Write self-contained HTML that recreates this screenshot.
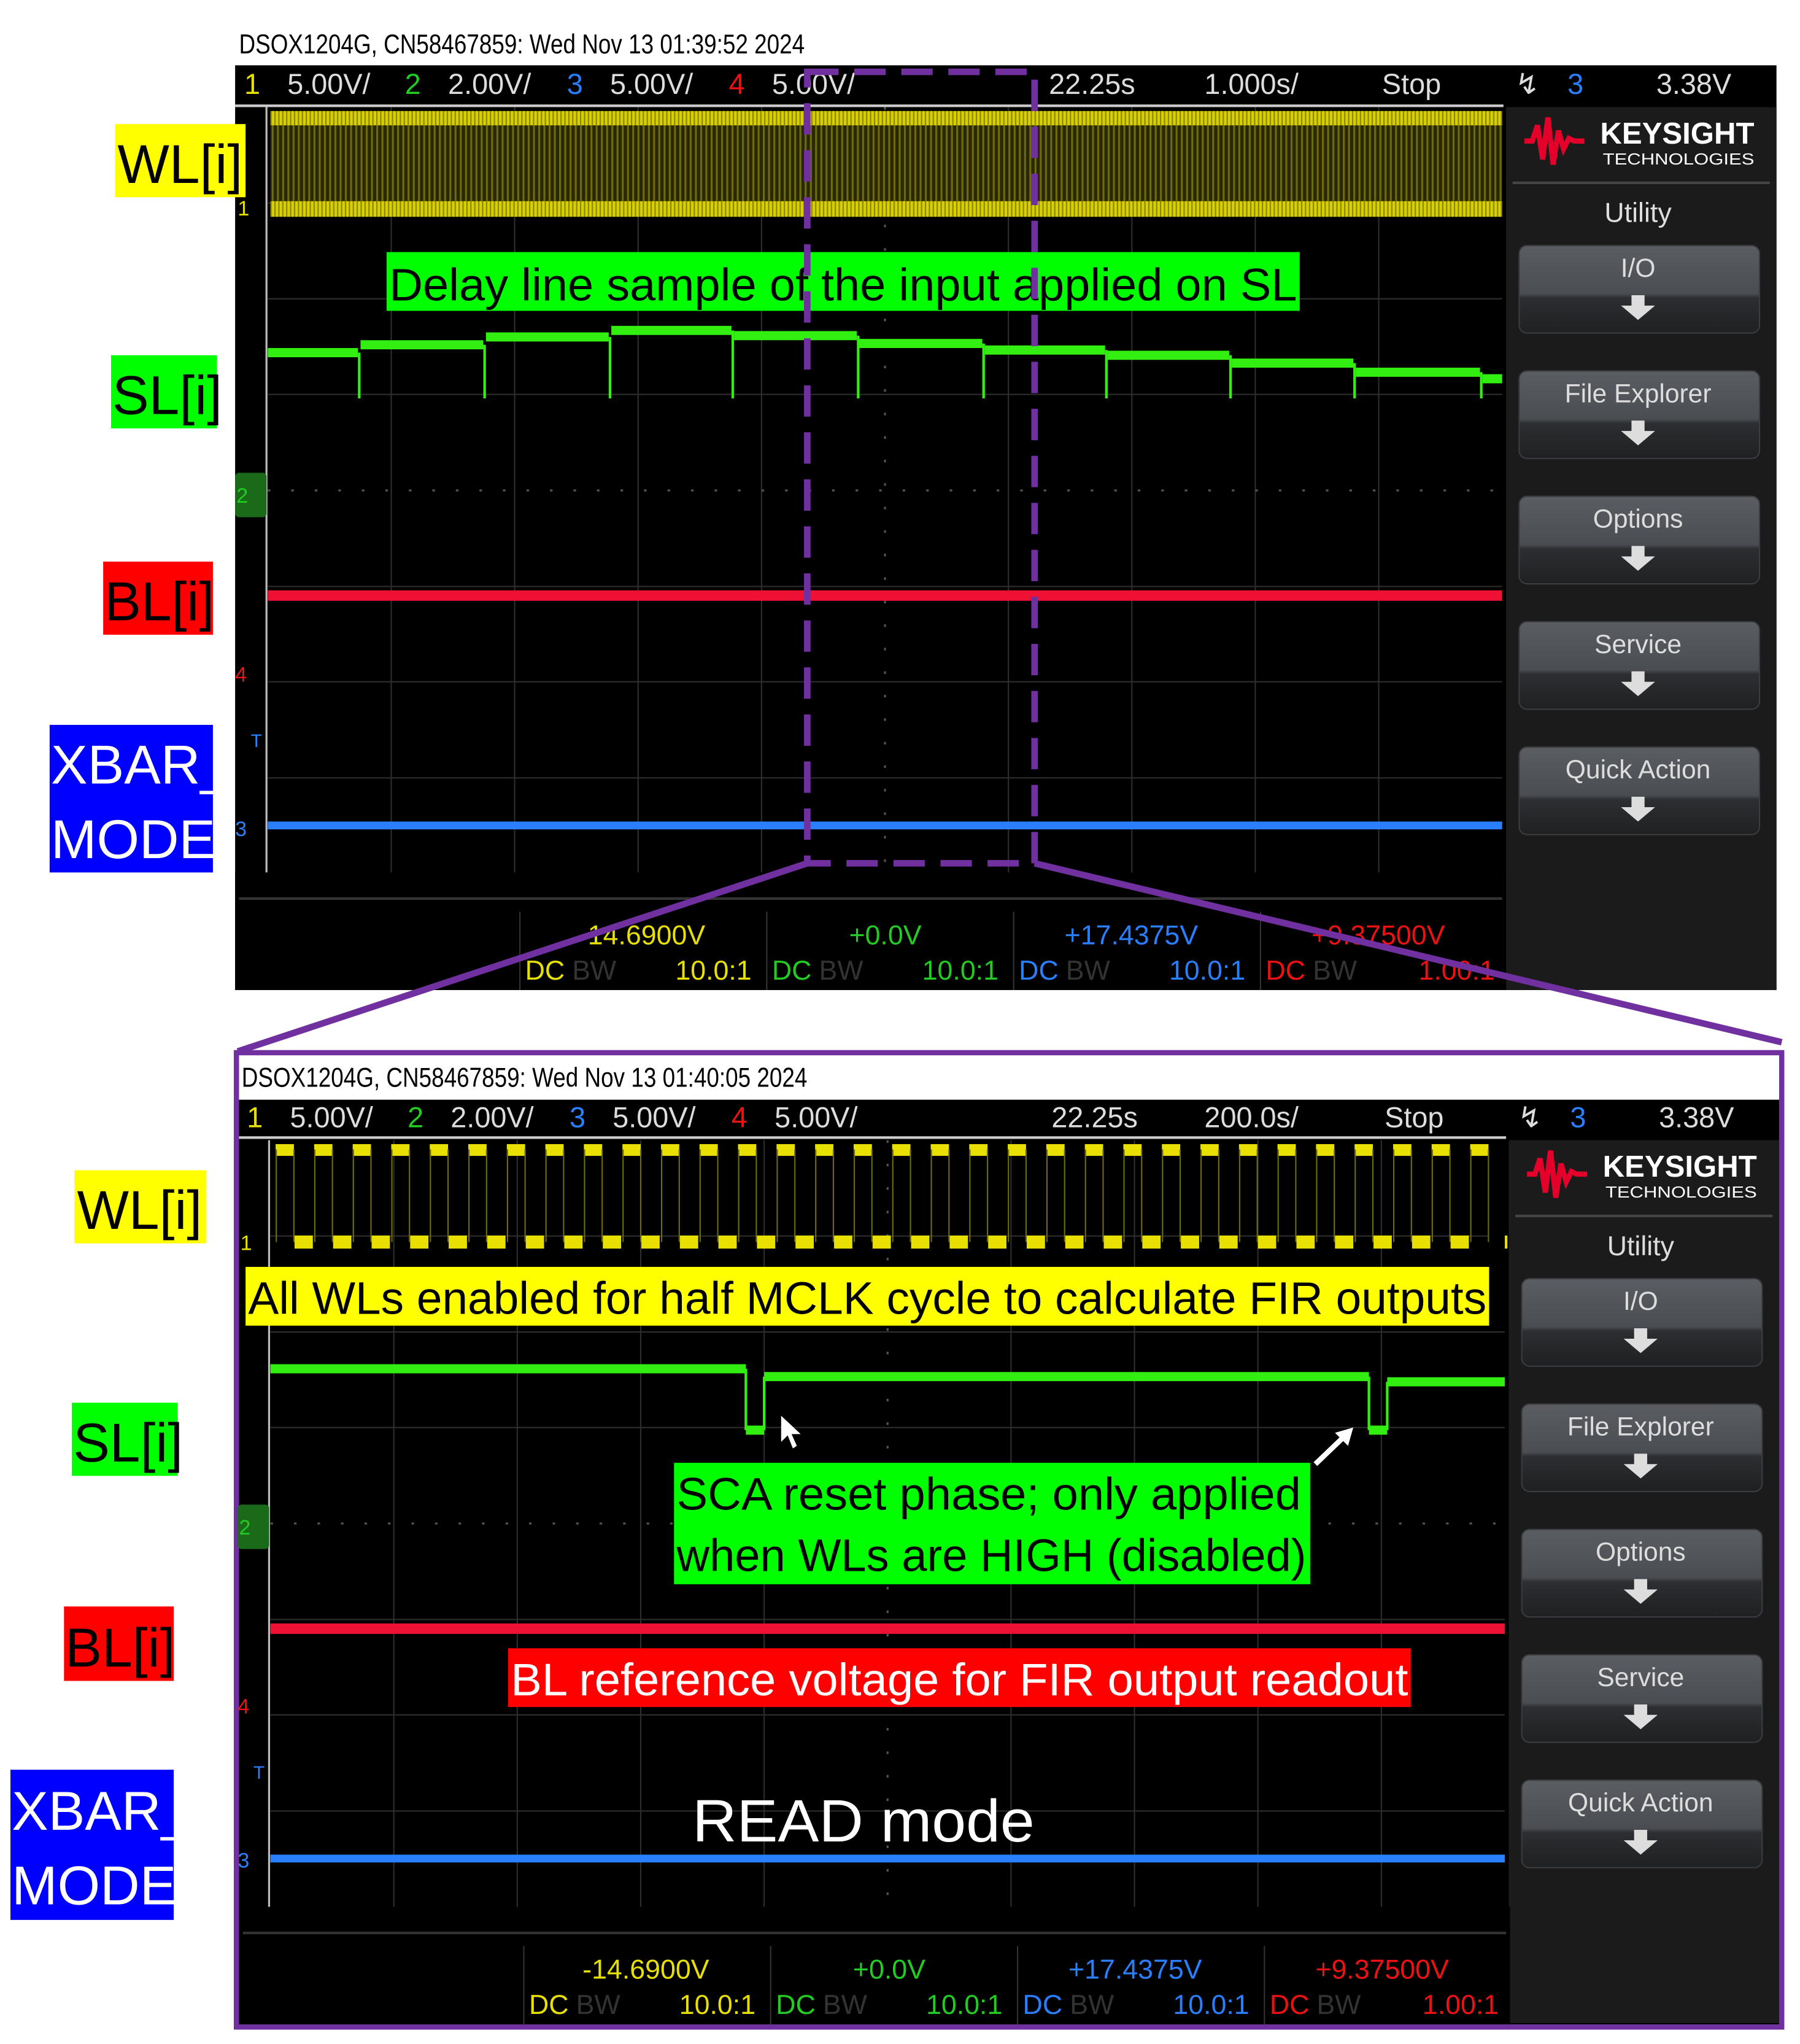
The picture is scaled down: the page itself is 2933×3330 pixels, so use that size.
<!DOCTYPE html>
<html><head><meta charset="utf-8"><style>
html,body{margin:0;padding:0;background:#fff;}
svg{display:block}
text{font-family:"Liberation Sans",sans-serif}
.sc{font-family:"Liberation Sans Narrow","Liberation Sans",sans-serif}
</style></head><body>
<svg width="2933" height="3330" viewBox="0 0 1378 1565" preserveAspectRatio="none" xmlns="http://www.w3.org/2000/svg">
<defs>
<linearGradient id="btn" x1="0" y1="0" x2="0" y2="1">
<stop offset="0" stop-color="#5a5d62"/><stop offset="0.55" stop-color="#4a4d52"/><stop offset="0.6" stop-color="#2c2e31"/><stop offset="1" stop-color="#1e2022"/></linearGradient>
<pattern id="ystripe" width="4" height="10" patternUnits="userSpaceOnUse"><rect width="4" height="10" fill="#2a2800"/><rect width="1.5" height="10" fill="#6e6a10"/></pattern>
<pattern id="yband" width="3" height="12" patternUnits="userSpaceOnUse"><rect width="3" height="12" fill="#d8d000"/><rect width="1" height="12" fill="#8a8400"/></pattern>
<g id="wl">
<rect x="0" y="0" width="14" height="9" fill="#e8e000"/>
<rect x="14.5" y="70" width="14" height="10" fill="#e8e000"/>
<line x1="0.5" y1="4" x2="0.5" y2="75" stroke="#6e6a10" stroke-width="1"/>
<line x1="14" y1="4" x2="14" y2="75" stroke="#6e6a10" stroke-width="1"/>
</g>
<g id="grid">
<rect x="0" y="0" width="945" height="587" fill="#000"/>
<g stroke="#2e2e2e" stroke-width="1">
<line x1="94.5" y1="0" x2="94.5" y2="587"/><line x1="189" y1="0" x2="189" y2="587"/><line x1="283.5" y1="0" x2="283.5" y2="587"/><line x1="378" y1="0" x2="378" y2="587"/><line x1="567" y1="0" x2="567" y2="587"/><line x1="661.5" y1="0" x2="661.5" y2="587"/><line x1="756" y1="0" x2="756" y2="587"/><line x1="850.5" y1="0" x2="850.5" y2="587"/>
<line x1="0" y1="73.4" x2="945" y2="73.4"/><line x1="0" y1="146.8" x2="945" y2="146.8"/><line x1="0" y1="220" x2="945" y2="220"/><line x1="0" y1="367" x2="945" y2="367"/><line x1="0" y1="440" x2="945" y2="440"/><line x1="0" y1="513.6" x2="945" y2="513.6"/>
</g>
<g stroke="#555" stroke-width="1.5"><line x1="472.5" y1="0" x2="472.5" y2="587" stroke-dasharray="2 16"/><line x1="0" y1="293.5" x2="945" y2="293.5" stroke-dasharray="2 16"/></g>
</g>
<g id="panel">
<rect x="0" y="0" width="207" height="676" fill="#1b1b1b"/>
<path d="M14 26 L20 26 L24 14 L28 40 L32 8 L36 44 L40 18 L44 32 L48 24 L52 26 L60 26" fill="none" stroke="#e4002b" stroke-width="4"/>
<text x="72" y="28" font-size="23" font-weight="bold" fill="#fff" textLength="118" lengthAdjust="spacingAndGlyphs">KEYSIGHT</text>
<text x="74" y="44" font-size="12" fill="#fff" textLength="116" lengthAdjust="spacingAndGlyphs">TECHNOLOGIES</text>
<line x1="5" y1="58" x2="202" y2="58" stroke="#444" stroke-width="2"/>
<text x="101" y="88" font-size="21" fill="#ddd" text-anchor="middle" class="sc">Utility</text>
<g id="b1"><rect x="10" y="106" width="184" height="67" rx="6" fill="url(#btn)" stroke="#3a3c40"/><path d="M88 152 L114 152 L101 163 Z" fill="#ddd"/><rect x="96" y="144" width="10" height="9" fill="#ddd"/></g>
<text x="101" y="130" font-size="20" fill="#ddd" text-anchor="middle" class="sc">I/O</text>
<use href="#b1" y="96"/><text x="101" y="226" font-size="20" fill="#ddd" text-anchor="middle" class="sc">File Explorer</text>
<use href="#b1" y="192"/><text x="101" y="322" font-size="20" fill="#ddd" text-anchor="middle" class="sc">Options</text>
<use href="#b1" y="288"/><text x="101" y="418" font-size="20" fill="#ddd" text-anchor="middle" class="sc">Service</text>
<use href="#b1" y="384"/><text x="101" y="514" font-size="20" fill="#ddd" text-anchor="middle" class="sc">Quick Action</text>
</g>
<g id="bottom">
<rect x="0" y="0" width="973" height="90" fill="#000"/>
<line x1="3" y1="20" x2="970" y2="20" stroke="#333" stroke-width="2"/>
<g stroke="#333" stroke-width="1"><line x1="218" y1="30" x2="218" y2="90"/><line x1="407" y1="30" x2="407" y2="90"/><line x1="596" y1="30" x2="596" y2="90"/><line x1="785" y1="30" x2="785" y2="90"/></g>
<g font-size="21" class="sc">
<text x="222" y="82" fill="#e8e000">DC</text><text x="258" y="82" fill="#333">BW</text><text x="337" y="82" fill="#e8e000">10.0:1</text>
<text x="411" y="82" fill="#22cc22">DC</text><text x="447" y="82" fill="#333">BW</text><text x="526" y="82" fill="#22cc22">10.0:1</text>
<text x="600" y="82" fill="#2a7fff">DC</text><text x="636" y="82" fill="#333">BW</text><text x="715" y="82" fill="#2a7fff">10.0:1</text>
<text x="789" y="82" fill="#ee1111">DC</text><text x="825" y="82" fill="#333">BW</text><text x="906" y="82" fill="#ee1111">1.00:1</text>
<text x="263" y="55" fill="#e8e000">-14.6900V</text><text x="470" y="55" fill="#22cc22">+0.0V</text><text x="635" y="55" fill="#2a7fff">+17.4375V</text><text x="824" y="55" fill="#ee1111">+9.37500V</text>
</g>
</g>
</defs>

<!-- ===== TOP SCOPE ===== -->
<text x="183" y="41" font-size="21" fill="#000" textLength="433" lengthAdjust="spacingAndGlyphs" class="sc">DSOX1204G, CN58467859: Wed Nov 13 01:39:52 2024</text>
<rect x="180" y="50" width="1180" height="708" fill="#000"/>
<g font-size="22" class="sc">
<text x="187" y="72" fill="#e8e000">1</text><text x="220" y="72" fill="#ddd">5.00V/</text>
<text x="310" y="72" fill="#22cc22">2</text><text x="343" y="72" fill="#ddd">2.00V/</text>
<text x="434" y="72" fill="#2a7fff">3</text><text x="467" y="72" fill="#ddd">5.00V/</text>
<text x="558" y="72" fill="#ee1111">4</text><text x="591" y="72" fill="#ddd">5.00V/</text>
<text x="803" y="72" fill="#ddd">22.25s</text><text x="922" y="72" fill="#ddd">1.000s/</text>
<text x="1058" y="72" fill="#ddd">Stop</text><text x="1160" y="72" fill="#ddd">↯</text>
<text x="1200" y="72" fill="#2a7fff">3</text><text x="1268" y="72" fill="#ddd">3.38V</text>
</g>
<rect x="180" y="80" width="971" height="2" fill="#ccc"/>
<use href="#grid" x="205" y="82"/>
<line x1="204" y1="82" x2="204" y2="668" stroke="#bbb" stroke-width="1.5"/>
<rect x="207" y="96" width="943" height="58" fill="url(#ystripe)"/>
<rect x="207" y="85" width="943" height="11" fill="url(#yband)"/>
<rect x="207" y="154" width="943" height="12" fill="url(#yband)"/>
<text x="182" y="165" font-size="16" fill="#e8e000">1</text>
<rect x="180" y="362" width="24" height="34" rx="3" fill="#1a6a1a"/><text x="181" y="385" font-size="16" fill="#22cc22">2</text>
<text x="180" y="522" font-size="16" fill="#ee1111">4</text>
<text x="192" y="572" font-size="14" fill="#2a7fff">T</text>
<text x="180" y="640" font-size="16" fill="#2a7fff">3</text>
<g fill="none" stroke="#33ee11" stroke-width="7">
<path d="M205 270 H274 M276 264 H370 M372 258 H466 M468 253 H560 M562 257 H656 M658 263 H752 M754 268 H846 M848 272 H941 M943 278 H1036 M1038 285 H1133 M1135 290 H1150"/>
</g>
<g stroke="#33ee11" stroke-width="2"><path d="M275 270 V305 M371 264 V305 M467 258 V305 M561 253 V305 M657 257 V305 M753 263 V305 M847 268 V305 M942 272 V305 M1037 278 V305 M1134 285 V305"/></g>
<rect x="296" y="193" width="699" height="45" fill="#00ff00"/>
<text x="298" y="230" font-size="35" fill="#000" textLength="695" lengthAdjust="spacingAndGlyphs">Delay line sample of the input applied on SL</text>
<rect x="205" y="452" width="945" height="8" fill="#ee1133"/>
<rect x="205" y="629" width="945" height="6" fill="#2a7fff"/>
<use href="#panel" x="1153" y="82"/>
<use href="#bottom" x="180" y="668"/>
<rect x="618" y="55" width="174" height="606" fill="none" stroke="#7030a0" stroke-width="5" stroke-dasharray="24 12"/>
<line x1="618" y1="661" x2="182" y2="805" stroke="#7030a0" stroke-width="5"/>
<line x1="792" y1="661" x2="1364" y2="798" stroke="#7030a0" stroke-width="5"/>

<rect x="88" y="95" width="100" height="56" fill="#ffff00"/><text x="90" y="140" font-size="42" fill="#000">WL[i]</text>
<rect x="85" y="272" width="81" height="56" fill="#00ff00"/><text x="86" y="317" font-size="42" fill="#000">SL[i]</text>
<rect x="79" y="430" width="84" height="56" fill="#ff0000"/><text x="80" y="475" font-size="42" fill="#000">BL[i]</text>
<rect x="38" y="555" width="125" height="113" fill="#0000ff"/><text x="39" y="600" font-size="42" fill="#fff">XBAR_</text><text x="39" y="657" font-size="42" fill="#fff">MODE</text>

<!-- ===== BOTTOM SCOPE ===== -->
<rect x="181" y="806" width="1183" height="746" fill="none" stroke="#7030a0" stroke-width="4"/>
<text x="185" y="832" font-size="21" fill="#000" textLength="433" lengthAdjust="spacingAndGlyphs" class="sc">DSOX1204G, CN58467859: Wed Nov 13 01:40:05 2024</text>
<rect x="183" y="842" width="1179" height="708" fill="#000"/>
<g font-size="22" class="sc">
<text x="189" y="863" fill="#e8e000">1</text><text x="222" y="863" fill="#ddd">5.00V/</text>
<text x="312" y="863" fill="#22cc22">2</text><text x="345" y="863" fill="#ddd">2.00V/</text>
<text x="436" y="863" fill="#2a7fff">3</text><text x="469" y="863" fill="#ddd">5.00V/</text>
<text x="560" y="863" fill="#ee1111">4</text><text x="593" y="863" fill="#ddd">5.00V/</text>
<text x="805" y="863" fill="#ddd">22.25s</text><text x="922" y="863" fill="#ddd">200.0s/</text>
<text x="1060" y="863" fill="#ddd">Stop</text><text x="1162" y="863" fill="#ddd">↯</text>
<text x="1202" y="863" fill="#2a7fff">3</text><text x="1270" y="863" fill="#ddd">3.38V</text>
</g>
<rect x="183" y="870" width="970" height="2" fill="#ccc"/>
<use href="#grid" x="207" y="873"/>
<line x1="206" y1="873" x2="206" y2="1460" stroke="#bbb" stroke-width="1.5"/>
<g transform="translate(0,876)">
<use href="#wl" x="211"/><use href="#wl" x="240.5"/><use href="#wl" x="270"/><use href="#wl" x="299.5"/><use href="#wl" x="329"/><use href="#wl" x="358.5"/><use href="#wl" x="388"/><use href="#wl" x="417.5"/><use href="#wl" x="447"/><use href="#wl" x="476.5"/><use href="#wl" x="506"/><use href="#wl" x="535.5"/><use href="#wl" x="565"/><use href="#wl" x="594.5"/><use href="#wl" x="624"/><use href="#wl" x="653.5"/><use href="#wl" x="683"/><use href="#wl" x="712.5"/><use href="#wl" x="742"/><use href="#wl" x="771.5"/><use href="#wl" x="801"/><use href="#wl" x="830.5"/><use href="#wl" x="860"/><use href="#wl" x="889.5"/><use href="#wl" x="919"/><use href="#wl" x="948.5"/><use href="#wl" x="978"/><use href="#wl" x="1007.5"/><use href="#wl" x="1037"/><use href="#wl" x="1066.5"/><use href="#wl" x="1096"/><use href="#wl" x="1125.5"/>
</g>
<rect x="1140" y="940" width="12" height="30" fill="#000"/>
<text x="184" y="957" font-size="16" fill="#e8e000">1</text>
<rect x="188" y="970" width="952" height="45" fill="#ffff00"/>
<text x="190" y="1006" font-size="35" fill="#000" textLength="948" lengthAdjust="spacingAndGlyphs">All WLs enabled for half MCLK cycle to calculate FIR outputs</text>
<g fill="none" stroke="#33ee11" stroke-width="7"><path d="M207 1048 H571 M585 1054 H1048 M1062 1058 H1152 M571 1095 H585 M1048 1095 H1062"/></g>
<g stroke="#33ee11" stroke-width="2"><path d="M571 1048 V1095 M585 1054 V1095 M1048 1054 V1095 M1062 1058 V1095"/></g>
<path d="M598 1084 L598 1104 L603 1099 L607 1109 L610 1107 L606 1098 L613 1098 Z" fill="#fff"/>
<path d="M1007 1121 L1030 1099" stroke="#fff" stroke-width="4"/><path d="M1036 1093 L1022 1097 L1032 1107 Z" fill="#fff"/>
<rect x="182" y="1152" width="24" height="34" rx="3" fill="#1a6a1a"/><text x="183" y="1175" font-size="16" fill="#22cc22">2</text>
<rect x="516" y="1120" width="487" height="93" fill="#00ff00"/>
<text x="518" y="1156" font-size="35" fill="#000" textLength="478" lengthAdjust="spacingAndGlyphs">SCA reset phase;  only applied</text>
<text x="518" y="1203" font-size="35" fill="#000" textLength="482" lengthAdjust="spacingAndGlyphs">when WLs are HIGH (disabled)</text>
<rect x="207" y="1243" width="945" height="8" fill="#ee1133"/>
<rect x="389" y="1262" width="691" height="45" fill="#ff0000"/>
<text x="391" y="1298" font-size="35" fill="#fff" textLength="687" lengthAdjust="spacingAndGlyphs">BL reference voltage for FIR output readout</text>
<text x="182" y="1312" font-size="16" fill="#ee1111">4</text>
<text x="194" y="1362" font-size="14" fill="#2a7fff">T</text>
<text x="530" y="1410" font-size="46" fill="#fff" textLength="262" lengthAdjust="spacingAndGlyphs">READ mode</text>
<rect x="207" y="1420" width="945" height="6" fill="#2a7fff"/>
<text x="182" y="1430" font-size="16" fill="#2a7fff">3</text>
<use href="#panel" x="1155" y="873"/>
<use href="#bottom" x="183" y="1460"/>

<rect x="57" y="896" width="101" height="56" fill="#ffff00"/><text x="59" y="941" font-size="42" fill="#000">WL[i]</text>
<rect x="55" y="1074" width="81" height="56" fill="#00ff00"/><text x="56" y="1119" font-size="42" fill="#000">SL[i]</text>
<rect x="49" y="1230" width="84" height="57" fill="#ff0000"/><text x="50" y="1276" font-size="42" fill="#000">BL[i]</text>
<rect x="8" y="1355" width="125" height="115" fill="#0000ff"/><text x="9" y="1401" font-size="42" fill="#fff">XBAR_</text><text x="9" y="1458" font-size="42" fill="#fff">MODE</text>
</svg>
</body></html>
